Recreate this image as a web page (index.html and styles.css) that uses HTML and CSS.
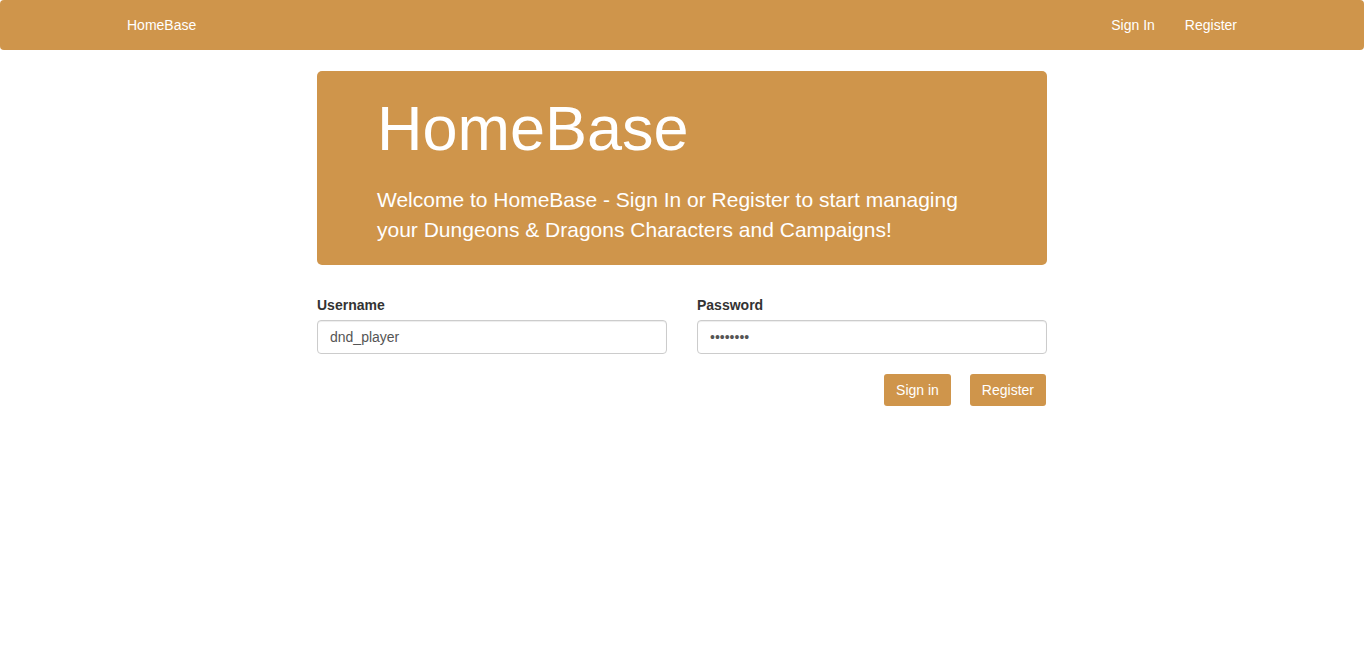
FILE: index.html
```html
<!DOCTYPE html>
<html lang="en">
<head>
<meta charset="utf-8">
<title>HomeBase</title>
<link rel="stylesheet" href="styles.css">
</head>
<body>
<nav class="navbar">
  <div class="nav-inner">
    <a class="brand" href="#">HomeBase</a>
    <ul class="nav-links">
      <li><a href="#">Sign In</a></li>
      <li><a href="#">Register</a></li>
    </ul>
  </div>
</nav>
<main class="main">
  <section class="jumbotron">
    <h1 class="title">HomeBase</h1>
    <p class="lead">Welcome to HomeBase - Sign In or Register to start managing your Dungeons &amp; Dragons Characters and Campaigns!</p>
  </section>
  <form class="login-form">
    <div class="fields">
      <div class="form-group">
        <label for="username">Username</label>
        <input id="username" class="form-control" type="text" value="dnd_player">
      </div>
      <div class="form-group">
        <label for="password">Password</label>
        <input id="password" class="form-control" type="password" value="password">
      </div>
    </div>
    <div class="actions">
      <button type="button" class="btn">Sign in</button>
      <button type="button" class="btn">Register</button>
    </div>
  </form>
</main>
</body>
</html>
```
FILE: styles.css
```css
* { box-sizing: border-box; }
html, body { margin: 0; padding: 0; }
body {
  font-family: "Liberation Sans", Arial, sans-serif;
  font-size: 14px;
  line-height: 1.428571;
  color: #333;
  background: #fff;
}
.navbar {
  width: calc(100% - 1px);
  height: 50px;
  background: #cf954b;
  border-radius: 4px;
}
.nav-inner {
  width: 1170px;
  margin: 0 auto;
  padding: 0 15px;
  height: 50px;
  display: flex;
  align-items: center;
  justify-content: space-between;
}
.brand {
  color: #fff;
  text-decoration: none;
  padding: 15px;
  line-height: 20px;
}
.nav-links {
  list-style: none;
  margin: 0;
  padding: 0;
  display: flex;
}
.nav-links a {
  display: block;
  padding: 15px;
  line-height: 20px;
  color: #fff;
  text-decoration: none;
}
.main {
  width: 731px;
  padding-right: 1px;
  margin: 21px auto 0;
}
.jumbotron {
  background: #cf954b;
  border-radius: 5px;
  padding: 23px 60px 20px;
  color: #fff;
  margin-bottom: 30px;
}
.title {
  margin: 0 0 22px;
  font-size: 63px;
  font-weight: 400;
  line-height: 69px;
}
.lead {
  margin: 0;
  font-size: 21px;
  line-height: 30px;
}
.fields {
  display: grid;
  grid-template-columns: 1fr 1fr;
  column-gap: 30px;
}
.form-group {
  display: flex;
  flex-direction: column;
  margin-bottom: 20px;
}
.form-group label {
  font-weight: 700;
  margin-bottom: 5px;
  line-height: 20px;
}
.form-control {
  height: 34px;
  padding: 6px 12px;
  font-family: inherit;
  font-size: 14px;
  color: #555;
  border: 1px solid #ccc;
  border-radius: 4px;
  box-shadow: inset 0 1px 1px rgba(0,0,0,.075);
  background: #fff;
}
.actions {
  display: flex;
  justify-content: flex-end;
  gap: 19px;
  padding-right: 1px;
}
.btn {
  height: 32px;
  padding: 0 12px;
  font-family: inherit;
  font-size: 14px;
  color: #fff;
  background: #cf954b;
  border: none;
  border-radius: 3px;
  cursor: pointer;
}
```
